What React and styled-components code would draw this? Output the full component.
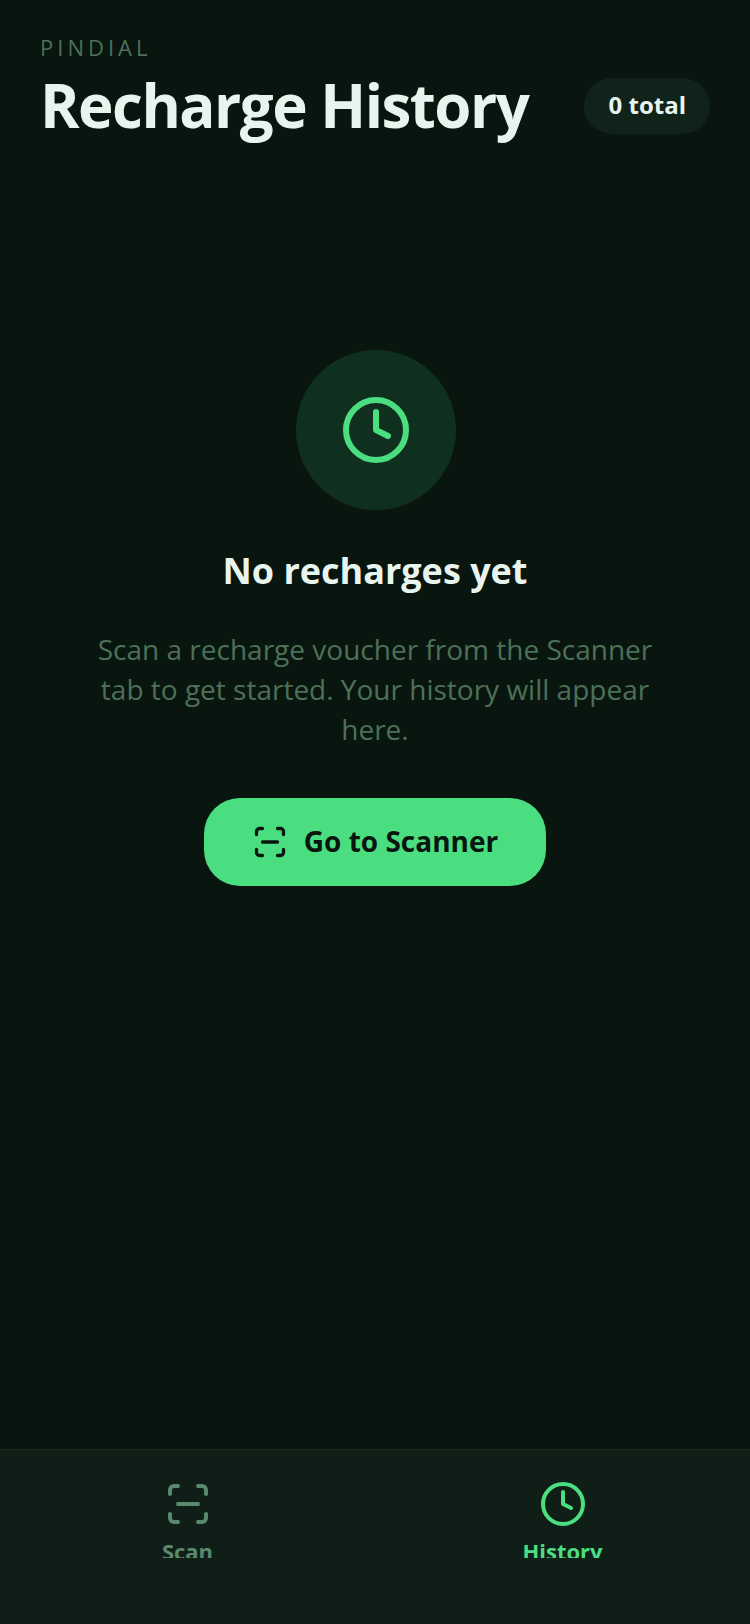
import React from "react";
import styled, { createGlobalStyle } from "styled-components";
import { Clock, ScanLine } from "lucide-react";

const GlobalStyle = createGlobalStyle`
  html, body {
    margin: 0;
    padding: 0;
    background: #09160f;
  }
  * {
    box-sizing: border-box;
  }
`;

const Page = styled.div`
  width: 750px;
  height: 1624px;
  display: flex;
  flex-direction: column;
  background: #09160f;
  font-family: "Open Sans", "Liberation Sans", sans-serif;
`;

const Header = styled.header`
  padding: 31px 40px 0;
  display: flex;
  align-items: flex-end;
  justify-content: space-between;
`;

const Brand = styled.div`
  display: flex;
  flex-direction: column;
`;

const Eyebrow = styled.div`
  font-size: 22px;
  line-height: 32px;
  letter-spacing: 4px;
  color: #4d7059;
`;

const Title = styled.h1`
  margin: 4px 0 0;
  font-size: 60px;
  line-height: 76px;
  font-weight: 700;
  letter-spacing: -1.5px;
  color: #e8f5ee;
`;

const CountPill = styled.div`
  height: 56px;
  padding: 0 24px 3px 25px;
  margin-bottom: 9px;
  display: flex;
  align-items: center;
  border-radius: 28px;
  background: #10231a;
  font-size: 24px;
  font-weight: 700;
  color: #e8f5ee;
`;

const Empty = styled.main`
  flex: 1;
  display: flex;
  flex-direction: column;
  align-items: center;
  padding: 207px 80px 0;
`;

const IconCircle = styled.div`
  width: 160px;
  height: 160px;
  margin-left: 2px;
  border-radius: 50%;
  display: flex;
  align-items: center;
  justify-content: center;
  background: #10301f;
  color: #4ade80;
`;

const EmptyTitle = styled.h2`
  margin: 37px 0 0;
  font-size: 36px;
  line-height: 48px;
  font-weight: 700;
  color: #e8f5ee;
`;

const EmptyText = styled.p`
  margin: 34px 0 0;
  font-size: 28px;
  line-height: 40px;
  text-align: center;
  color: #4d7059;
`;

const Button = styled.button`
  margin-top: 49px;
  height: 88px;
  padding: 0 48px;
  display: flex;
  align-items: center;
  gap: 16px;
  border: 0;
  border-radius: 36px;
  background: #4ade80;
  color: #09160f;
  font-family: inherit;
  font-size: 28px;
  font-weight: 700;
`;

const ButtonLabel = styled.span`
  margin-top: -2px;
`;

const TabBar = styled.nav`
  height: 175px;
  display: grid;
  grid-template-columns: 1fr 1fr;
  align-items: start;
  padding-top: 30px;
  background: #0f1f18;
  border-top: 1px solid #1b2e24;
`;

const Tab = styled.div`
  height: 78px;
  overflow: hidden;
  display: flex;
  flex-direction: column;
  align-items: center;
  gap: 8px;
  color: ${(p) => (p.$active ? "#4ade80" : "#5a8a6e")};

  svg {
    flex-shrink: 0;
  }
`;

const TabLabel = styled.span`
  font-size: 22px;
  line-height: 30px;
  font-weight: 700;
`;

export default function App() {
  return (
    <Page>
      <GlobalStyle />
      <Header>
        <Brand>
          <Eyebrow>PINDIAL</Eyebrow>
          <Title>Recharge History</Title>
        </Brand>
        <CountPill>0 total</CountPill>
      </Header>
      <Empty>
        <IconCircle>
          <Clock size={72} strokeWidth={2} />
        </IconCircle>
        <EmptyTitle>No recharges yet</EmptyTitle>
        <EmptyText>
          Scan a recharge voucher from the Scanner tab to get started. Your
          history will appear here.
        </EmptyText>
        <Button>
          <ScanLine size={36} strokeWidth={2.2} />
          <ButtonLabel>Go to Scanner</ButtonLabel>
        </Button>
      </Empty>
      <TabBar>
        <Tab>
          <ScanLine size={48} strokeWidth={2} />
          <TabLabel>Scan</TabLabel>
        </Tab>
        <Tab $active>
          <Clock size={48} strokeWidth={2} />
          <TabLabel>History</TabLabel>
        </Tab>
      </TabBar>
    </Page>
  );
}
